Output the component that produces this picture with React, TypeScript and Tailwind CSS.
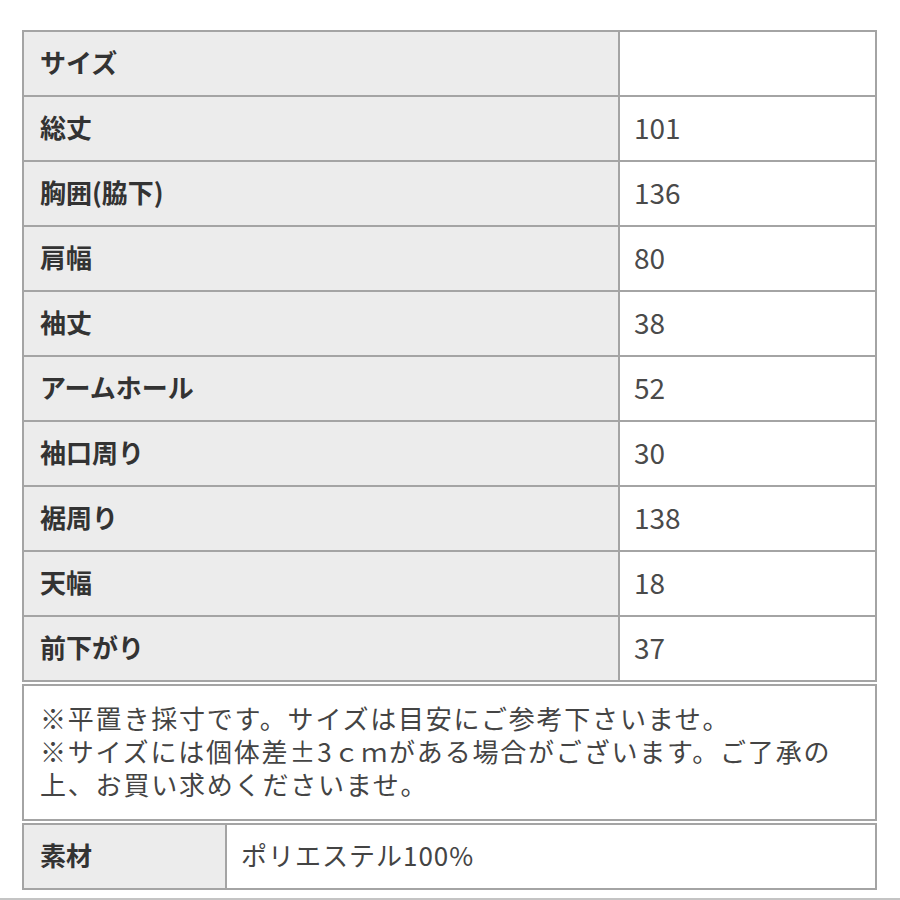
import React from "react";

const rows: [string, string][] = [
  ["サイズ", ""],
  ["総丈", "101"],
  ["胸囲(脇下)", "136"],
  ["肩幅", "80"],
  ["袖丈", "38"],
  ["アームホール", "52"],
  ["袖口周り", "30"],
  ["裾周り", "138"],
  ["天幅", "18"],
  ["前下がり", "37"],
];

const font = {
  fontFamily: '"Noto Sans CJK JP", "Noto Sans", sans-serif',
};

export default function App() {
  return (
    <div className="w-[900px] h-[900px] bg-white overflow-hidden flex flex-col" style={font}>
      <div className="ml-[22px] mt-[30px] w-[855px] flex flex-col">
        <table className="w-full border-collapse">
          <tbody>
            {rows.map(([label, value]) => (
              <tr key={label} className="h-[65px]">
                <td className="w-[596px] border-2 border-[#a4a4a4] bg-[#ececec] pl-[16px] pb-[4px] text-[26px] font-bold text-[#333]">
                  {label}
                </td>
                <td className="border-2 border-[#a4a4a4] bg-white pl-[14px] pb-[4px] text-[28px] text-[#4a4a4a]">
                  {value}
                </td>
              </tr>
            ))}
          </tbody>
        </table>

        <div className="mt-[2px] border-2 border-[#a4a4a4] bg-white pl-[16px] pt-[15px] pb-[19px] text-[26px] leading-[33px] tracking-[1.8px] text-[#444]">
          <p>※平置き採寸です。サイズは目安にご参考下さいませ。</p>
          <p>※サイズには個体差±3ｃｍがある場合がございます。ご了承の</p>
          <p>上、お買い求めくださいませ。</p>
        </div>

        <table className="mt-[2px] w-full border-collapse">
          <tbody>
            <tr className="h-[65px]">
              <td className="w-[203px] border-2 border-[#a4a4a4] bg-[#ececec] pl-[16px] pb-[4px] text-[26px] font-bold text-[#333]">
                素材
              </td>
              <td className="border-2 border-[#a4a4a4] bg-white pl-[14px] pb-[4px] text-[26px] tracking-[1px] text-[#444]">
                ポリエステル100%
              </td>
            </tr>
          </tbody>
        </table>
      </div>
      <div className="mt-[8px] h-[2px] w-full bg-[#c4c4c4]" />
    </div>
  );
}
